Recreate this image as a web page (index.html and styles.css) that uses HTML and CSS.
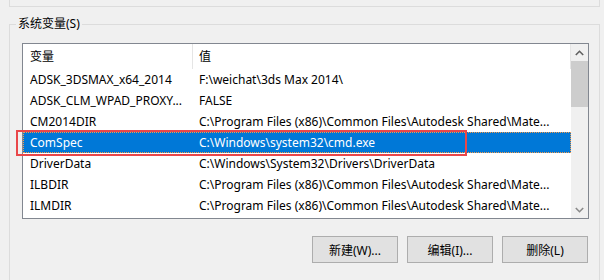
FILE: index.html
```html
<!DOCTYPE html>
<html lang="zh-CN">
<head>
<meta charset="utf-8">
<title>系统变量</title>
<link rel="stylesheet" href="styles.css">
</head>
<body>
<div class="top"></div>
<div class="group">
  <span class="legend">系统变量(S)</span>
  <div class="list">
    <div class="content">
      <div class="hdr"><div class="c1">变量</div><div class="c2">值</div></div>
      <div class="row"><div class="c1">ADSK_3DSMAX_x64_2014</div><div class="c2">F:\weichat\3ds Max 2014\</div></div>
      <div class="row"><div class="c1">ADSK_CLM_WPAD_PROXY...</div><div class="c2">FALSE</div></div>
      <div class="row"><div class="c1">CM2014DIR</div><div class="c2">C:\Program Files (x86)\Common Files\Autodesk Shared\Mate...</div></div>
      <div class="row sel"><div class="c1">ComSpec</div><div class="c2">C:\Windows\system32\cmd.exe</div><div class="mark"></div></div>
      <div class="row"><div class="c1">DriverData</div><div class="c2">C:\Windows\System32\Drivers\DriverData</div></div>
      <div class="row"><div class="c1">ILBDIR</div><div class="c2">C:\Program Files (x86)\Common Files\Autodesk Shared\Mate...</div></div>
      <div class="row"><div class="c1">ILMDIR</div><div class="c2">C:\Program Files (x86)\Common Files\Autodesk Shared\Mate...</div></div>
    </div>
    <div class="sb">
      <div class="sbbtn"><svg width="9" height="6" viewBox="0 0 9 6"><polyline points="0.8,5 4.5,1.3 8.2,5" fill="none" stroke="#606060" stroke-width="1.6"/></svg></div>
      <div class="track"><div class="thumb"></div></div>
      <div class="sbbtn"><svg width="9" height="6" viewBox="0 0 9 6"><polyline points="0.8,1 4.5,4.7 8.2,1" fill="none" stroke="#8a8a8a" stroke-width="1.6"/></svg></div>
    </div>
  </div>
  <div class="btns">
    <button class="btn">新建(W)...</button>
    <button class="btn">编辑(I)...</button>
    <button class="btn">删除(L)</button>
  </div>
</div>
</body>
</html>
```

FILE: styles.css
```css
html, body {
  margin: 0;
  padding: 0;
  width: 604px;
  height: 280px;
  overflow: hidden;
  background: #f0f0f0;
  color: #000;
  font-family: "Noto Sans", "Noto Sans CJK SC", sans-serif;
  font-size: 12px;
}

.top {
  height: 6px;
  margin: 0 4px 0 9px;
  border: 1px solid #dcdcdc;
  border-top: 0;
}

.group {
  position: relative;
  margin: 17px 4px 0 9px;
  border: 1px solid #dcdcdc;
  padding: 18px 10px 40px 12px;
}

.legend {
  position: absolute;
  left: 6px;
  top: -10px;
  padding: 0 2px;
  line-height: 18px;
  background: #f0f0f0;
}

.list {
  display: flex;
  height: 176px;
  box-sizing: border-box;
  border: 1px solid #828790;
  background: #fff;
}

.content {
  flex: 1;
  min-width: 0;
}

.hdr {
  display: flex;
  height: 25px;
  line-height: 25px;
}

.c1 {
  width: 170px;
  flex: none;
  box-sizing: border-box;
  padding-left: 7px;
  white-space: nowrap;
  overflow: hidden;
}

.c2 {
  flex: 1;
  min-width: 0;
  padding-left: 6px;
  white-space: nowrap;
  overflow: hidden;
}

.hdr .c1 {
  border-right: 1px solid #e5e5e5;
}

.hdr .c2 {
  border-right: 1px solid #e5e5e5;
}

.row {
  display: flex;
  height: 21px;
  line-height: 21px;
}

.row.sel {
  position: relative;
  background: #0078d7;
  color: #fff;
  outline: 1px dotted #f59b4a;
  outline-offset: -1px;
}

.mark {
  position: absolute;
  left: -7px;
  top: -2px;
  width: 451px;
  height: 26px;
  box-sizing: border-box;
  border: 2px solid #e9474a;
  pointer-events: none;
}

.sb {
  width: 17px;
  flex: none;
  display: flex;
  flex-direction: column;
  background: #f0f0f0;
}

.sbbtn {
  height: 17px;
  display: flex;
  align-items: center;
  justify-content: center;
}

.track {
  flex: 1;
}

.thumb {
  height: 46px;
  background: #cdcdcd;
}

.btns {
  display: flex;
  justify-content: flex-end;
  gap: 9px;
  margin-top: 17px;
  padding-right: 1px;
}

.btn {
  width: 86px;
  height: 27px;
  padding: 0;
  background: #e1e1e1;
  border: 1px solid #adadad;
  font: inherit;
  color: #000;
}
```
